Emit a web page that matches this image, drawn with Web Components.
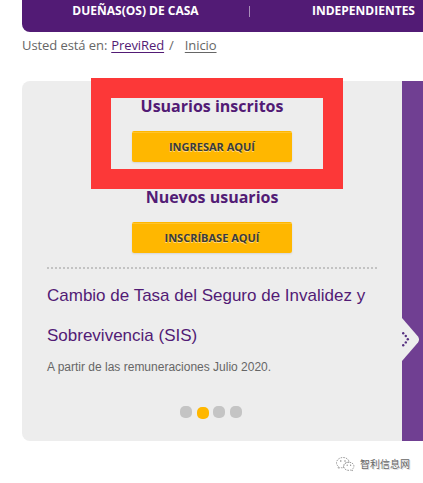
<!DOCTYPE html>
<html lang="es">
<head>
<meta charset="utf-8">
<title>PreviRed</title>
<style>
body {
    margin: 0;
    width: 423px;
    height: 483px;
    overflow: hidden;
    background: #fff;
    font-family: "Open Sans", "Liberation Sans", sans-serif;
    --purple: #521b75;
    --violet: #703f92;
    --amber: #ffb700;
    --panel: #ededed;
}
</style>
</head>
<body>
<pr-page>
    <pr-nav slot="nav">
        <pr-nav-item>DUEÑAS(OS) DE CASA</pr-nav-item>
        <pr-nav-item>INDEPENDIENTES</pr-nav-item>
    </pr-nav>
    <pr-breadcrumb slot="crumbs" home="PreviRed" current="Inicio"></pr-breadcrumb>
    <pr-slide>
        <pr-access heading="Usuarios inscritos" action="INGRESAR AQUÍ"></pr-access>
        <pr-access heading="Nuevos usuarios" action="INSCRÍBASE AQUÍ"></pr-access>
        <pr-news slot="news">
            <span slot="title">Cambio de Tasa del Seguro de Invalidez y<br>Sobrevivencia (SIS)</span>
            A partir de las remuneraciones Julio 2020.
        </pr-news>
        <pr-pager slot="pager" count="4" active="1"></pr-pager>
    </pr-slide>
    <pr-highlight slot="overlay"></pr-highlight>
    <pr-watermark slot="footer">智利信息网</pr-watermark>
</pr-page>
<script>
"use strict";
{
    // Base class: renders the element's markup in an open shadow root
    class Base extends HTMLElement {
        constructor() {
            super();
            this.attachShadow({ mode: 'open' });
        }
        connectedCallback() {
            const template = document.createElement('template');
            template.innerHTML = this.render();
            this.shadowRoot.replaceChildren(template.content.cloneNode(true));
        }
    }

    class Page extends Base {
        render() {
            return `
<style>
:host { display: flex; flex-direction: column; position: relative; height: 483px; overflow: hidden; }
main { margin: 24px 0 0 22px; }
</style>
<slot name="nav"></slot>
<slot name="crumbs"></slot>
<main><slot></slot></main>
<slot name="footer"></slot>
<slot name="overlay"></slot>`;
        }
    }
    customElements.define('pr-page', Page);

    class Nav extends Base {
        render() {
            return `
<style>
:host { display: flex; flex: none; box-sizing: border-box; height: 32px; margin-left: 22px; padding-top: 2px;
    background: var(--purple); border-bottom-left-radius: 8px; overflow: hidden; }
</style>
<slot></slot>`;
        }
    }
    customElements.define('pr-nav', Nav);

    class NavItem extends Base {
        render() {
            return `
<style>
:host { display: flex; flex: none; width: 228px; height: 18px;
    color: #fff; font-size: 12px; font-weight: 700; line-height: 18px; white-space: nowrap; }
span { flex: 1; text-align: center; }
i { flex: none; width: 1px; height: 11px; margin-top: 4px; background: #a98fba; }
:host(:last-child) span { flex: none; padding-left: 62px; }
:host(:last-child) i { display: none; }
</style>
<span><slot></slot></span><i></i>`;
        }
    }
    customElements.define('pr-nav-item', NavItem);

    class Breadcrumb extends Base {
        render() {
            return `
<style>
:host { display: flex; flex: none; height: 25px; margin-left: 22px; color: #666; font-size: 13px; line-height: 26px;
    letter-spacing: -.08px; white-space: pre; }
a { text-decoration: underline; text-underline-offset: 2px; }
.home { color: var(--purple); margin-left: 4px; }
.sep { margin: 0 11px 0 5px; }
</style>
<span>Usted está en:</span><a class="home">${this.getAttribute('home')}</a><span class="sep">/</span><a>${this.getAttribute('current')}</a>`;
        }
    }
    customElements.define('pr-breadcrumb', Breadcrumb);

    class Slide extends Base {
        render() {
            return `
<style>
:host { display: flex; height: 360px; border-radius: 8px 0 0 8px; overflow: hidden; background: var(--panel); }
.body { display: flex; flex-direction: column; box-sizing: border-box; width: 380px; padding: 12px 25px 0; }
.edge { flex: 1; background: var(--violet); }
svg { display: block; margin-top: 236px; }
</style>
<div class="body"><slot></slot><slot name="news"></slot><slot name="pager"></slot></div>
<div class="edge">
    <svg width="18" height="46" viewBox="0 0 18 46">
        <path d="M0 1 L16 19.5 Q18 22.5 16 25.5 L0 44Z" fill="#ededed"/>
        <g fill="#563080">
            <circle cx="1.2" cy="16.2" r="1.2"/><circle cx="3.8" cy="19" r="1.2"/><circle cx="5.8" cy="22.3" r="1.2"/>
            <circle cx="3.8" cy="25.4" r="1.2"/><circle cx="1.2" cy="28.3" r="1.2"/>
        </g>
    </svg>
</div>`;
        }
    }
    customElements.define('pr-slide', Slide);

    class Access extends Base {
        render() {
            return `
<style>
:host { display: flex; flex-direction: column; align-items: center; flex: none; height: 91px; }
h2 { margin: 0 0 12px; height: 26px; color: var(--purple); font-size: 16px; font-weight: 700; line-height: 26px;
    white-space: nowrap; }
button { box-sizing: border-box; width: 160px; height: 31px; padding: 0; border: 0; border-radius: 2px;
    background: linear-gradient(var(--amber) 1px, #ffc42e 1px 2px, var(--amber) 2px); box-shadow: 0 1px 2px rgba(0,0,0,.1);
    color: #3a3a3a; font: 700 11px/32px "Open Sans", sans-serif; text-shadow: 0 1px 0 rgba(255,255,255,.5); }
</style>
<h2>${this.getAttribute('heading')}</h2>
<button>${this.getAttribute('action')}</button>`;
        }
    }
    customElements.define('pr-access', Access);

    class News extends Base {
        render() {
            return `
<style>
:host { display: block; flex: none; height: 131px; font-family: "Liberation Sans", Arial, sans-serif; white-space: nowrap; }
hr { height: 2px; margin: -8px 0 7px; border: 0; background: repeating-linear-gradient(90deg, #c3c3c3 0 2px, transparent 2px 4px); }
h3 { margin: 0; color: var(--purple); font-size: 17px; font-weight: 400; line-height: 40px; }
p { margin: 1px 0 0; color: #666; font-size: 12px; line-height: 20px; }
</style>
<hr>
<h3><slot name="title"></slot></h3>
<p><slot></slot></p>`;
        }
    }
    customElements.define('pr-news', News);

    class Pager extends Base {
        render() {
            const active = Number(this.getAttribute('active'));
            let dots = '';
            for (let i = 0; i < Number(this.getAttribute('count')); i++) {
                dots += `<i${i === active ? ' class="on"' : ''}></i>`;
            }
            return `
<style>
:host { display: flex; justify-content: center; gap: 4.6px; padding-right: 2px; }
i { width: 12px; height: 12px; border-radius: 5px; background: #c4c4c4; }
.on { margin-top: 1px; background: var(--amber); }
</style>
${dots}`;
        }
    }
    customElements.define('pr-pager', Pager);

    // Red frame drawn over the first access block
    class Highlight extends Base {
        render() {
            return `
<style>
:host { position: absolute; box-sizing: border-box; left: 91px; top: 78px; width: 252px; height: 111px; border: 20px solid #fc3838; }
</style>`;
        }
    }
    customElements.define('pr-highlight', Highlight);

    class Watermark extends Base {
        render() {
            return `
<style>
:host { display: flex; align-items: center; gap: 5px; margin: 15px 0 0 335px; height: 16px;
    font: 10px/16px "Noto Sans CJK SC", sans-serif; color: #666; }
span { text-shadow: 1px 1px 0 #ddd; }
</style>
<svg width="20" height="16" viewBox="0 0 20 16" fill="#fff" stroke="#888" stroke-width=".8" stroke-dasharray="1.6 1">
    <path d="M3.5 10.5 L3 12.5 L5.5 11.4 Q7 12 8.5 11.7 C8 8 11 5.8 14.2 6 C13.5 3 11 1.5 8 1.5 C4.5 1.5 1.5 3.8 1.5 6.8 Q1.5 9 3.5 10.5Z"/>
    <path d="M14 6.3 C11 6.3 8.7 8.2 8.7 10.4 C8.7 12.7 11 14.4 14 14.4 L15.6 14.1 L17.5 15 L17 13.5 C20.5 11 19 6.3 14 6.3Z"/>
    <g fill="#777" stroke="none"><circle cx="5.8" cy="5" r=".7"/><circle cx="10" cy="5" r=".7"/><circle cx="12.2" cy="9.2" r=".6"/><circle cx="15.6" cy="9.2" r=".6"/></g>
</svg>
<span><slot></slot></span>`;
        }
    }
    customElements.define('pr-watermark', Watermark);
}
</script>
</body>
</html>
